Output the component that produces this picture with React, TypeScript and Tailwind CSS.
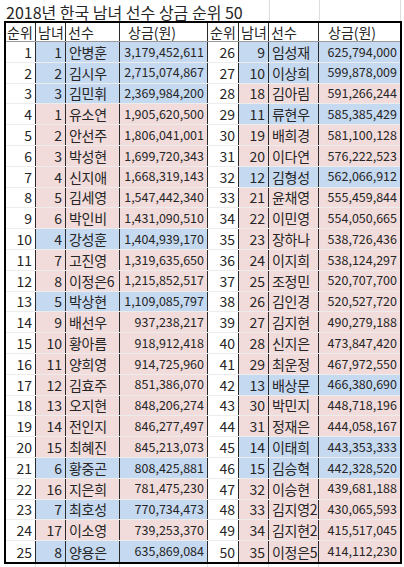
import React from "react";

type Row = [number, number, string, string, "b" | "p"];

const left: Row[] = [
  [1, 1, "안병훈", "3,179,452,611", "b"],
  [2, 2, "김시우", "2,715,074,867", "b"],
  [3, 3, "김민휘", "2,369,984,200", "b"],
  [4, 1, "유소연", "1,905,620,500", "p"],
  [5, 2, "안선주", "1,806,041,001", "p"],
  [6, 3, "박성현", "1,699,720,343", "p"],
  [7, 4, "신지애", "1,668,319,143", "p"],
  [8, 5, "김세영", "1,547,442,340", "p"],
  [9, 6, "박인비", "1,431,090,510", "p"],
  [10, 4, "강성훈", "1,404,939,170", "b"],
  [11, 7, "고진영", "1,319,635,650", "p"],
  [12, 8, "이정은6", "1,215,852,517", "p"],
  [13, 5, "박상현", "1,109,085,797", "b"],
  [14, 9, "배선우", "937,238,217", "p"],
  [15, 10, "황아름", "918,912,418", "p"],
  [16, 11, "양희영", "914,725,960", "p"],
  [17, 12, "김효주", "851,386,070", "p"],
  [18, 13, "오지현", "848,206,274", "p"],
  [19, 14, "전인지", "846,277,497", "p"],
  [20, 15, "최혜진", "845,213,073", "p"],
  [21, 6, "황중곤", "808,425,881", "b"],
  [22, 16, "지은희", "781,475,230", "p"],
  [23, 7, "최호성", "770,734,473", "b"],
  [24, 17, "이소영", "739,253,370", "p"],
  [25, 8, "양용은", "635,869,084", "b"],
];

const right: Row[] = [
  [26, 9, "임성재", "625,794,000", "b"],
  [27, 10, "이상희", "599,878,009", "b"],
  [28, 18, "김아림", "591,266,244", "p"],
  [29, 11, "류현우", "585,385,429", "b"],
  [30, 19, "배희경", "581,100,128", "p"],
  [31, 20, "이다연", "576,222,523", "p"],
  [32, 12, "김형성", "562,066,912", "b"],
  [33, 21, "윤채영", "555,459,844", "p"],
  [34, 22, "이민영", "554,050,665", "p"],
  [35, 23, "장하나", "538,726,436", "p"],
  [36, 24, "이지희", "538,124,297", "p"],
  [37, 25, "조정민", "520,707,700", "p"],
  [38, 26, "김인경", "520,527,720", "p"],
  [39, 27, "김지현", "490,279,188", "p"],
  [40, 28, "신지은", "473,847,420", "p"],
  [41, 29, "최운정", "467,972,550", "p"],
  [42, 13, "배상문", "466,380,690", "b"],
  [43, 30, "박민지", "448,718,196", "p"],
  [44, 31, "정재은", "444,058,167", "p"],
  [45, 14, "이태희", "443,353,333", "b"],
  [46, 15, "김승혁", "442,328,520", "b"],
  [47, 32, "이승현", "439,681,188", "p"],
  [48, 33, "김지영2", "430,065,593", "p"],
  [49, 34, "김지현2", "415,517,045", "p"],
  [50, 35, "이정은5", "414,112,230", "p"],
];

const cols = "grid grid-cols-[30px_30px_54px_88px_31px_30px_50px_81px]";
const cell = "border-r border-[#2a2a2a] overflow-hidden whitespace-nowrap flex items-center";

const Half = ({ r, last }: { r: Row; last?: boolean }) => {
  const fill = r[4] === "b" ? "bg-[#c5d9f1]" : "bg-[#f2dcdb]";
  return (
    <>
      <div className={`${cell} justify-end pr-[3px] bg-white text-[14px]`}>{r[0]}</div>
      <div className={`${cell} justify-end pr-[3px] ${fill} text-[14px]`}>{r[1]}</div>
      <div className={`${cell} pl-[3px] ${fill} text-[14px] tracking-[-0.3px]`}>{r[2]}</div>
      <div
        className={`${last ? "" : "border-r border-[#2a2a2a]"} overflow-hidden whitespace-nowrap flex items-center justify-end pr-[3px] ${fill} text-[12.5px]`}
      >
        {r[3]}
      </div>
    </>
  );
};

const App = () => {
  return (
    <div
      className="w-[404px] h-[567px] bg-white text-[#262626] overflow-hidden"
      style={{ fontFamily: '"Noto Sans CJK KR", "Noto Sans", sans-serif' }}
    >
      <div className="h-[21px] flex">
        <div className="w-[269px] pl-[6px] pt-[4px] text-[16px] leading-[16px] whitespace-nowrap">
          2018년 한국 남녀 선수 상금 순위 50
        </div>
        <div className="w-[50px] border-l border-[#dedede]" />
        <div className="w-[81px] border-l border-[#dedede]" />
        <div className="flex-1 border-l border-[#dedede]" />
      </div>
      <div className="ml-[4px] w-[398px] border-2 border-black">
        <div className={`${cols} h-[19px] border-b border-[#9a9a9a] text-[14px] leading-none bg-white`}>
          <div className={`${cell} pl-[1px]`}>순위</div>
          <div className={`${cell} pl-[2px]`}>남녀</div>
          <div className={`${cell} pl-[2px]`}>선수</div>
          <div className={`${cell} pl-[8px]`}>상금(원)</div>
          <div className={`${cell} pl-[2px]`}>순위</div>
          <div className={`${cell} pl-[2px]`}>남녀</div>
          <div className={`${cell} pl-[2px]`}>선수</div>
          <div className="overflow-hidden whitespace-nowrap flex items-center pl-[9px]">상금(원)</div>
        </div>
        {left.map((l, i) => (
          <div
            key={l[0]}
            className={`${cols} h-[20.8px] leading-none ${i < 24 ? "border-b border-[#ececec]" : ""}`}
          >
            <Half r={l} />
            <Half r={right[i]} last />
          </div>
        ))}
      </div>
      <div className="ml-[6px] h-[4px] flex">
        <div className="w-[30px] border-r border-[#dedede]" />
        <div className="w-[30px] border-r border-[#dedede]" />
        <div className="w-[54px] border-r border-[#dedede]" />
        <div className="w-[88px] border-r border-[#dedede]" />
        <div className="w-[31px] border-r border-[#dedede]" />
        <div className="w-[30px] border-r border-[#dedede]" />
        <div className="w-[50px] border-r border-[#dedede]" />
      </div>
    </div>
  );
};

export default App;
